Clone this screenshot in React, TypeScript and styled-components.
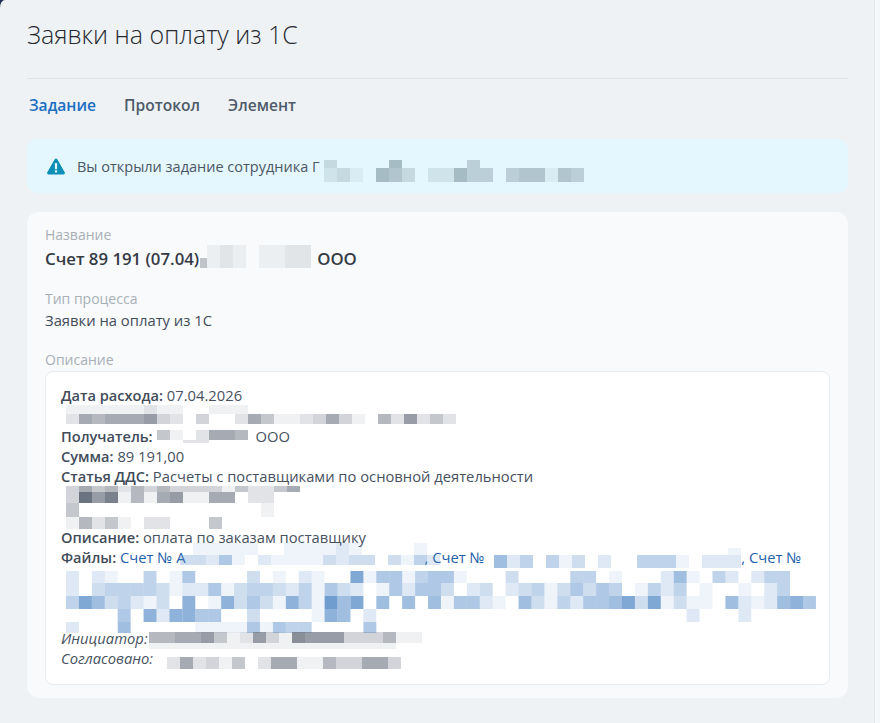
import React from 'react';
import styled, { createGlobalStyle } from 'styled-components';

const GlobalStyle = createGlobalStyle`
  html, body {
    margin: 0;
    padding: 0;
    height: 100%;
    background: #1d2f55;
  }
  body {
    font-family: "Open Sans", "Noto Sans", sans-serif;
    overflow: hidden;
  }
`;

const Page = styled.div`
  box-sizing: border-box;
  height: 723px;
  padding: 0 27px;
  background: #eef2f5;
  border-top-left-radius: 5px 8px;
  border-right: 5px solid #f6f7f9;
  box-shadow: inset -1px 0 0 #e4e7ea;
`;

const Title = styled.h1`
  margin: 0;
  height: 79px;
  box-sizing: border-box;
  padding-top: 16px;
  border-bottom: 1px solid #dfe3e7;
  font-size: 25px;
  line-height: 36px;
  font-weight: 300;
  color: #262a30;
`;

const Tabs = styled.nav`
  display: flex;
  gap: 28px;
  height: 60px;
  padding: 14px 0 0 2px;
  box-sizing: border-box;
`;

const Tab = styled.a<{ $active?: boolean }>`
  font-size: 15.6px;
  line-height: 24px;
  font-weight: 600;
  color: ${p => (p.$active ? '#1b6ec2' : '#4f5b69')};
`;

const Alert = styled.div`
  display: flex;
  align-items: center;
  gap: 12px;
  height: 54px;
  padding: 0 20px;
  border-radius: 10px;
  background: #e4f7fe;
  color: #4b5663;
  font-size: 14.5px;
`;

const Card = styled.section`
  margin-top: 19px;
  height: 486px;
  box-sizing: border-box;
  padding: 13px 18px;
  border-radius: 12px;
  background: #f8fafc;
`;

const Label = styled.div`
  font-size: 14px;
  line-height: 20px;
  color: #a9afb7;
`;

const Field = styled.div`
  margin-bottom: 17px;
`;

const Heading = styled.div`
  margin-top: 1px;
  font-size: 16.8px;
  line-height: 26px;
  font-weight: 600;
  color: #353b45;
  white-space: nowrap;
`;

const Value = styled.div`
  padding-bottom: 2px;
  font-size: 14.8px;
  line-height: 22px;
  color: #434c58;
`;

const Description = styled.div`
  margin-top: 1px;
  height: 314px;
  box-sizing: border-box;
  padding: 13px 15px;
  border: 1px solid #e7eaee;
  border-radius: 8px;
  background: #fff;
  font-size: 14.75px;
  line-height: 20.25px;
  color: #475160;
`;

const Line = styled.div<{ $clip?: boolean; $italic?: boolean }>`
  height: 20.25px;
  white-space: nowrap;
  font-style: ${p => (p.$italic ? 'italic' : 'normal')};
  ${p => (p.$clip ? 'overflow: hidden;' : '')}
`;

const Key = styled.b`
  font-size: 14.6px;
  font-weight: 600;
  color: #414b59;
`;

const Link = styled.a`
  color: #1f5fa9;
`;

const Patch = styled.span<{ $width: number; $left: number; $top: number }>`
  display: inline-block;
  position: relative;
  height: 0;
  width: ${p => p.$width}px;
  margin-left: ${p => p.$left}px;

  svg {
    position: absolute;
    display: block;
    left: 0;
    top: ${p => p.$top}px;
    overflow: visible;
  }
`;

const GRAY = '#6b7280';
const BLUE = '#5f92cb';
const TEAL = '#7d949f';

type Row = [number, string];

interface MosaicProps {
  rows: Row[];
  color?: string;
  cell?: number;
  width?: number;
  left?: number;
  top: number;
}

// pixelated redaction: one hex digit per cell, 0 = empty, a = full colour
const Mosaic: React.FC<MosaicProps> = ({ rows, color = GRAY, cell = 13, width, left = 0, top }) => {
  const cols = Math.max(...rows.map(r => r[1].length));
  const w = cols * cell;
  const h = rows.reduce((sum, r) => sum + r[0], 0);
  let y = 0;
  return (
    <Patch $width={width ?? 0} $left={left} $top={top}>
      <svg width={w} height={h} viewBox={`0 0 ${w} ${h}`}>
        {rows.map((row, i) => {
          const rowY = y;
          y += row[0];
          return row[1].split('').map((c, j) => {
            const v = parseInt(c, 16);
            if (!v) return null;
            return <rect key={`${i}-${j}`} x={j * cell} y={rowY} width={cell} height={row[0]} fill={color} opacity={v / 10} />;
          });
        })}
      </svg>
    </Patch>
  );
};

const WarnIcon = () => (
  <svg width="18" height="17" viewBox="0 0 18 17">
    <path d="M9 .5c.5 0 1 .3 1.300.8l7.400 13c.6 1-.1 2.200-1.300 2.200H1.600C.4 16.500-.3 15.300.3 14.300l7.400-13C8 .8 8.500.5 9 .5z" fill="#0d8fb6" />
    <rect x="7.900" y="5" width="2.200" height="6.200" rx=".6" fill="#e4f7fe" />
    <rect x="7.900" y="12.300" width="2.200" height="2.200" rx=".6" fill="#e4f7fe" />
  </svg>
);

const filesBlock: Row[] = [
  [12, '2021004015000030102100815514551000300004401000261042024400'],
  [13, '2034444312251344324153201525530230234135354014240100102400'],
  [13, '4863421307017353174196806060615521063142556838131106212675'],
  [13, '0000507277550030000176020000000000000000000000002000200'],
  [11, '200060000011115154400005'],
];

export default function App() {
  return (
    <>
      <GlobalStyle />
      <Page>
        <Title>Заявки на оплату из 1С</Title>
        <Tabs>
          <Tab $active>Задание</Tab>
          <Tab>Протокол</Tab>
          <Tab>Элемент</Tab>
        </Tabs>
        <Alert>
          <WarnIcon />
          <span>
            Вы открыли задание сотрудника Г
            <Mosaic
              color={TEAL}
              top={-12}
              left={4}
              rows={[
                [8, '300006000004'],
                [14, '23106530226440455154'],
              ]}
            />
          </span>
        </Alert>
        <Card>
          <Field>
            <Label>Название</Label>
            <Heading>
              Счет 89 191 (07.04)
              <Mosaic width={7} left={1} top={-7} cell={7} rows={[[10, '4']]} />
              <Mosaic width={110} top={-20} color="#8b8f96" rows={[[23, '12101122']]} />
              ООО
            </Heading>
          </Field>
          <Field>
            <Label>Тип процесса</Label>
            <Value>Заявки на оплату из 1С</Value>
          </Field>
          <Label>Описание</Label>
          <Description>
            <Line><Key>Дата расхода:</Key> 07.04.2026</Line>
            <Line>
              <Mosaic
                left={5}
                top={-16}
                rows={[
                  [9, '111111211001110'],
                  [10, '265666732030026411236310527242'],
                ]}
              />
            </Line>
            <Line>
              <Key>Получатель:</Key>
              <Mosaic width={99} left={4} top={-12} rows={[[10, '4102665'], [3, '00220']]} />
              ООО
            </Line>
            <Line><Key>Сумма:</Key> 89 191,00</Line>
            <Line><Key>Статья ДДС:</Key> Расчеты с поставщиками по основной деятельности</Line>
            <Line>
              <Mosaic
                left={5}
                top={-16}
                rows={[
                  [6, '364525353333142246'],
                  [11, '3a79151671166022'],
                  [14, '4000000000000001'],
                  [12, '152410220004'],
                ]}
              />
            </Line>
            <Line />
            <Line $clip><Key>Описание:</Key> оплата по заказам поставщику</Line>
            <Line>
              <Key>Файлы:</Key> <Link>Счет № А</Link>
              <Mosaic
                color={BLUE}
                width={244}
                left={-5}
                top={-20}
                rows={[
                  [12, '0111110011112100001'],
                  [10, '33251021111323303142'],
                ]}
              />
              <Link>, Счет № </Link>
              <Mosaic
                color={BLUE}
                width={247}
                left={6}
                top={-15}
                rows={[
                  [7, '0000000000000000001'],
                  [13, '6240413020044410222'],
                ]}
              />
              <Link>, Счет №</Link>
            </Line>
            <Line>
              <Mosaic color={BLUE} cell={12.93} left={5} top={-12} rows={filesBlock} />
            </Line>
            <Line />
            <Line />
            <Line $italic>
              Инициатор:
              <Mosaic
                left={1}
                top={-12}
                rows={[
                  [11, '556674127318777333511'],
                  [6, '1111111111111111111'],
                ]}
              />
            </Line>
            <Line $italic>
              Согласовано:
              <Mosaic left={14} top={-7} rows={[[12, '262314026611533663']]} />
            </Line>
          </Description>
        </Card>
      </Page>
    </>
  );
}
